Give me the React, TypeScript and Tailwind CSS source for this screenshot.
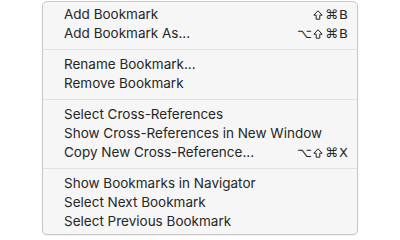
type Item = { label: string; shortcut?: string[] };

const groups: Item[][] = [
  [
    { label: "Add Bookmark", shortcut: ["shift", "⌘", "B"] },
    { label: "Add Bookmark As...", shortcut: ["⌥", "shift", "⌘", "B"] },
  ],
  [{ label: "Rename Bookmark..." }, { label: "Remove Bookmark" }],
  [
    { label: "Select Cross-References" },
    { label: "Show Cross-References in New Window" },
    { label: "Copy New Cross-Reference...", shortcut: ["⌥", "shift", "⌘", "X"] },
  ],
  [
    { label: "Show Bookmarks in Navigator" },
    { label: "Select Next Bookmark" },
    { label: "Select Previous Bookmark" },
  ],
];

function ShiftIcon() {
  return (
    <svg width="10" height="10" viewBox="0 0 10 10" className="mr-[1px]">
      <path d="M5 0.8 L9.2 5.2 H6.8 V9.2 H3.2 V5.2 H0.8 Z" fill="none" stroke="#262626" strokeWidth="1" strokeLinejoin="round" />
    </svg>
  );
}

export default function App() {
  return (
    <div className="h-[236px] w-[400px] bg-white pt-px pl-[42px] font-['Inter',sans-serif]">
      <div className="w-[316px] rounded-[5px] border border-[#c8c8c8] bg-[#f6f6f6] py-[3px] shadow-[0_1px_2px_rgba(0,0,0,0.08)]">
        {groups.map((group, gi) => (
          <div key={gi}>
            {gi > 0 && (
              <div className="pt-[6px] pb-[5px]">
                <div className="h-px bg-[#e2e2e2]" />
              </div>
            )}
            {group.map((item) => (
              <div
                key={item.label}
                className="flex h-[19px] items-center justify-between pr-[9px] pl-[21px] text-[13.5px] text-[#262626]"
              >
                <span>{item.label}</span>
                {item.shortcut && (
                  <span className="flex items-center gap-[1px] font-['DejaVu_Sans','Liberation_Sans',sans-serif] text-[13px]">
                    {item.shortcut.map((k, i) =>
                      k === "shift" ? <ShiftIcon key={i} /> : <span key={i}>{k}</span>
                    )}
                  </span>
                )}
              </div>
            ))}
          </div>
        ))}
      </div>
    </div>
  );
}
